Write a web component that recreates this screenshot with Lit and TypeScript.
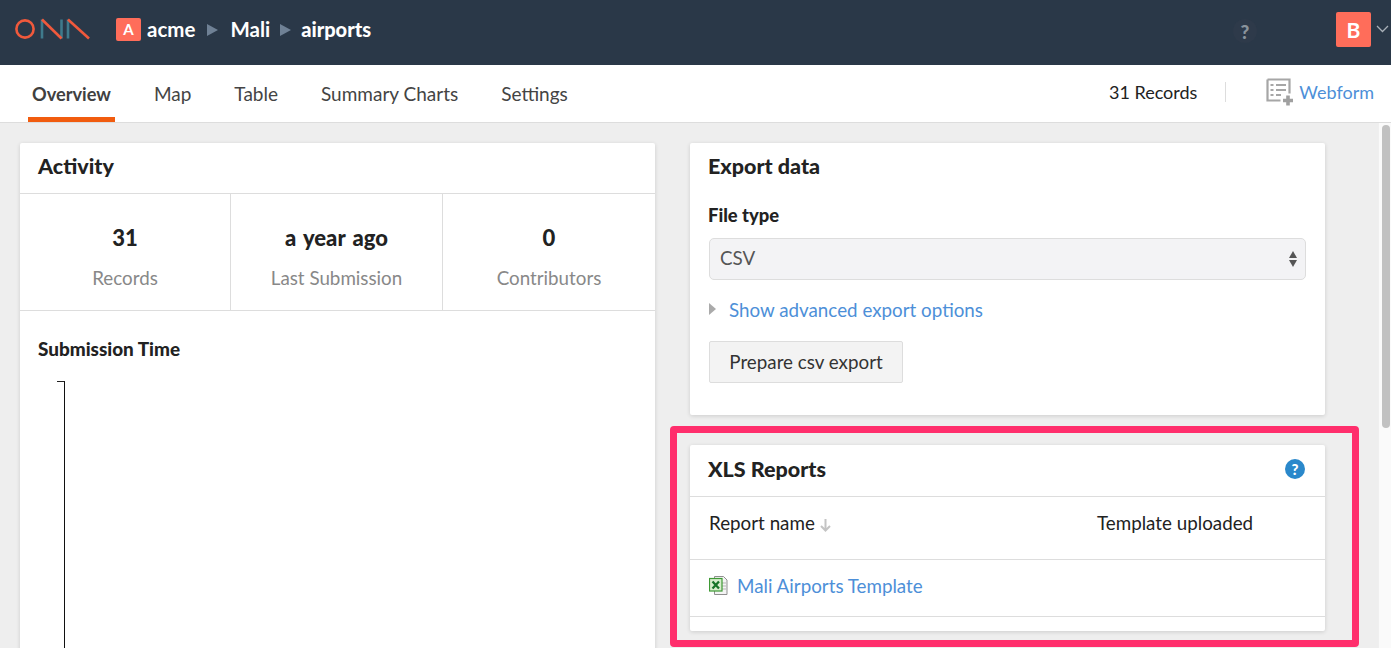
import { LitElement, html, css, svg } from "lit";
import { customElement } from "lit/decorators.js";

const logo = svg`<svg class="logo" width="76" height="22" viewBox="0 0 76 22" fill="none" stroke-width="2.600">
  <circle cx="10" cy="11" r="8.600" stroke="#f0593c" />
  <path d="M27 1.500V20.500" stroke="#3f7a8c" />
  <path d="M46.500 1.500V20.500" stroke="#3f7a8c" />
  <path d="M27 1.500 46.500 20.500" stroke="#f0593c" />
  <path d="M53 1.500V20.500" stroke="#3f7a8c" />
  <path d="M53 1.500 74 20.500" stroke="#f0593c" />
</svg>`;

const webformIcon = svg`<svg width="28" height="28" viewBox="0 0 28 28" fill="none">
  <path d="M1.500 1.500h22v14M1.500 1.500v21h13" stroke="#a6a6a6" stroke-width="2.200" />
  <path d="M4.500 7h3M4.500 12h3M4.500 17h3M10 7h10M10 12h10M10 17h5" stroke="#a6a6a6" stroke-width="2.200" />
  <path d="M22 17.500v10M17 22.500h10" stroke="#a0a0a0" stroke-width="3.600" />
</svg>`;

const excelIcon = svg`<svg width="20" height="21" viewBox="0 0 20 21">
  <path d="M5.500 1.500h9l3.500 3.500v14.500h-12.500z" fill="#f4f4f4" stroke="#8f8f8f" />
  <path d="M13 8h4M13 11h4M13 14h4" stroke="#b5b5b5" />
  <rect x="0.500" y="3.500" width="12.500" height="12.500" fill="#d8edcf" stroke="#3f9a35" stroke-width="1.200" />
  <path d="M3.500 6.500 10 13.500M10 6.500 3.500 13.500" stroke="#17752a" stroke-width="2.300" />
</svg>`;

@customElement("app-root")
export class AppRoot extends LitElement {
  static styles = css`
    :host {
      display: flex;
      flex-direction: column;
      height: 648px;
      overflow: hidden;
      font-family: Lato, "Liberation Sans", sans-serif;
      font-size: 18.800px;
      color: #222;
      background: #eee;
    }
    a {
      color: #4d8fd8;
      text-decoration: none;
    }
    .topbar {
      flex: none;
      height: 65px;
      box-sizing: border-box;
      background: #2a3848;
      display: flex;
      align-items: center;
      color: #fff;
      padding: 0 0 7px 15px;
    }
    .logo {
      flex: none;
    }
    .crumbs {
      display: flex;
      align-items: center;
      margin-left: 25px;
      font-size: 20.500px;
      font-weight: 700;
    }
    .org {
      width: 25px;
      height: 23px;
      background: #ff6d5a;
      border-radius: 2px;
      font-size: 15px;
      font-weight: 700;
      display: flex;
      align-items: center;
      justify-content: center;
      margin-right: 6px;
    }
    .sep {
      width: 0;
      height: 0;
      border-left: 11px solid #6f8195;
      border-top: 6px solid transparent;
      border-bottom: 6px solid transparent;
      margin: 2px 12px 0;
    }
    .sep.tight {
      margin: 2px 10px 0;
    }
    .crumbs b {
      font-size: 20px;
      font-weight: 900;
    }
    .top-right {
      margin-left: auto;
      display: flex;
      align-items: center;
    }
    .help {
      width: 24px;
      height: 24px;
      margin-top: 4px;
      border-radius: 50%;
      background: #2e3a4a;
      color: #8a939c;
      font-size: 19px;
      font-weight: 900;
      display: flex;
      align-items: center;
      justify-content: center;
      margin-right: 79px;
    }
    .avatar {
      width: 35px;
      height: 35px;
      background: #ff6d5a;
      border-radius: 2px;
      font-size: 21px;
      font-weight: 700;
      display: flex;
      align-items: center;
      justify-content: center;
    }
    .chev {
      margin: 0 2px 0 5px;
      display: block;
    }
    .tabs {
      flex: none;
      height: 58px;
      box-sizing: border-box;
      background: #fff;
      border-bottom: 1px solid #ddd;
      display: flex;
      align-items: stretch;
      padding-left: 28px;
    }
    .tab {
      display: flex;
      align-items: center;
      padding: 5px 4px 0;
      margin-right: 35px;
      font-size: 19px;
      color: #444;
      border-bottom: 5px solid transparent;
    }
    .tab.on {
      border-bottom-color: #f15c0f;
      font-size: 18.200px;
      font-weight: 700;
      color: #404040;
    }
    .tabs-right {
      margin-left: auto;
      display: flex;
      align-items: center;
      padding: 0 17px 4px 0;
      font-size: 18px;
    }
    .records {
      color: #222;
      padding-right: 28px;
      border-right: 1px solid #ddd;
      line-height: 20px;
      margin-right: 40px;
    }
    .webform {
      display: flex;
      align-items: center;
      gap: 5px;
    }
    .body {
      flex: 1;
      min-height: 0;
      display: flex;
    }
    .main {
      flex: 1;
      padding: 20px 0 0 20px;
      display: grid;
      grid-template-columns: 635px 635px;
      column-gap: 35px;
      align-items: start;
    }
    .scroll {
      flex: none;
      width: 13px;
      background: #fafafa;
      border-left: 1px solid #efefef;
      box-sizing: border-box;
      padding: 2px 1px 0 3px;
    }
    .thumb {
      height: 303px;
      background: #c1c1c1;
      border-radius: 5px;
    }
    .card {
      background: #fff;
      border-radius: 2px;
      box-shadow: 0 1px 4px rgba(0, 0, 0, 0.14);
    }
    .card h2 {
      margin: 0;
      font-size: 21.500px;
      font-weight: 900;
      line-height: 24px;
      color: #222;
    }
    .activity {
      height: 600px;
    }
    .activity h2 {
      padding: 11px 18px 15px;
      border-bottom: 1px solid #ddd;
    }
    .stats {
      display: grid;
      grid-template-columns: 210px 212px 1fr;
      height: 117px;
      box-sizing: border-box;
      border-bottom: 1px solid #ddd;
      text-align: center;
    }
    .stat {
      border-left: 1px solid #ddd;
      display: flex;
      flex-direction: column;
      align-items: center;
      padding-top: 32px;
      box-sizing: border-box;
    }
    .stat:first-child {
      border-left: 0;
    }
    .stat b {
      font-size: 22px;
      word-spacing: 2px;
      line-height: 24px;
      font-weight: 900;
      color: #222;
    }
    .stat span {
      color: #888;
      margin-top: 17px;
      line-height: 22px;
    }
    .chart {
      padding: 27px 18px 0;
    }
    .chart h3 {
      margin: 0;
      font-size: 18.900px;
      line-height: 22px;
      font-weight: 900;
    }
    .axis {
      margin: 21px 0 0 19px;
      width: 7px;
      height: 300px;
      border-top: 1px solid #222;
      border-right: 1.500px solid #111;
    }
    .col {
      display: flex;
      flex-direction: column;
      gap: 30px;
    }
    .export {
      height: 272px;
      box-sizing: border-box;
      padding: 11px 19px 0;
    }
    .export h2 {
      margin-left: -1px;
    }
    .label {
      font-weight: 900;
      font-size: 18.400px;
      line-height: 22px;
      margin-top: 26px;
      margin-left: -1px;
    }
    .select {
      height: 42px;
      box-sizing: border-box;
      margin-top: 12px;
      background: #f3f3f5;
      border: 1px solid #ddd;
      border-radius: 5px;
      display: flex;
      align-items: center;
      justify-content: space-between;
      padding: 0 8px 3px 10px;
      color: #555;
    }
    .arrows {
      display: flex;
      flex-direction: column;
      gap: 2px;
      margin-bottom: -3px;
    }
    .arrows i {
      width: 0;
      height: 0;
      border-left: 4.500px solid transparent;
      border-right: 4.500px solid transparent;
    }
    .arrows i:first-child {
      border-bottom: 7px solid #555;
    }
    .arrows i:last-child {
      border-top: 7px solid #555;
    }
    .advanced {
      display: flex;
      align-items: center;
      margin-top: 19px;
      line-height: 22px;
    }
    .advanced i {
      width: 0;
      height: 0;
      border-left: 7px solid #aaa;
      border-top: 6px solid transparent;
      border-bottom: 6px solid transparent;
      margin: 0 13px 2px 0;
    }
    .btn {
      display: flex;
      align-items: center;
      justify-content: center;
      width: 194px;
      height: 42px;
      box-sizing: border-box;
      margin-top: 20px;
      padding-bottom: 2px;
      background: #f3f3f3;
      border: 1px solid #ddd;
      border-radius: 2px;
      color: #333;
    }
    .xls-wrap {
      position: relative;
    }
    .xls {
      height: 186px;
      overflow: hidden;
    }
    .xls-head {
      height: 52px;
      box-sizing: border-box;
      border-bottom: 1px solid #ddd;
      display: flex;
      align-items: center;
      justify-content: space-between;
      padding: 0 20px 3px 19px;
    }
    .xls-head h2 {
      margin-left: -1px;
    }
    .q {
      width: 20px;
      height: 20px;
      border-radius: 50%;
      background: #2a88cb;
      color: #fff;
      font-size: 15px;
      font-weight: 900;
      display: flex;
      align-items: center;
      justify-content: center;
    }
    .xls-cols {
      height: 63px;
      box-sizing: border-box;
      border-bottom: 1px solid #ddd;
      display: grid;
      grid-template-columns: 388px 1fr;
      padding: 15px 19px 0;
      line-height: 22px;
      color: #222;
    }
    .sort {
      margin-left: 5px;
      vertical-align: -2px;
    }
    .xls-row {
      height: 57px;
      box-sizing: border-box;
      border-bottom: 1px solid #ddd;
      display: flex;
      align-items: center;
      gap: 8px;
      padding: 0 19px 6px;
    }
    .annotation {
      position: absolute;
      inset: -19px -34px -16px -20px;
      border: 7px solid #ff2e6c;
      border-radius: 4px;
      pointer-events: none;
    }
  `;

  render() {
    return html`
      <header class="topbar">
        ${logo}
        <div class="crumbs">
          <span class="org">A</span>
          <span>acme</span>
          <i class="sep"></i>
          <span>Mali</span>
          <i class="sep tight"></i>
          <b>airports</b>
        </div>
        <div class="top-right">
          <span class="help">?</span>
          <span class="avatar">B</span>
          <svg class="chev" width="13" height="8" viewBox="0 0 13 8" fill="none">
            <path d="M1 1l5.500 5.500L12 1" stroke="#a8b0b8" stroke-width="1.300" />
          </svg>
        </div>
      </header>
      <nav class="tabs">
        <span class="tab on">Overview</span>
        <span class="tab">Map</span>
        <span class="tab">Table</span>
        <span class="tab">Summary Charts</span>
        <span class="tab">Settings</span>
        <div class="tabs-right">
          <span class="records">31 Records</span>
          <a class="webform" href="#">${webformIcon}Webform</a>
        </div>
      </nav>
      <div class="body">
        <main class="main">
          <section class="card activity">
            <h2>Activity</h2>
            <div class="stats">
              <div class="stat"><b>31</b><span>Records</span></div>
              <div class="stat"><b>a year ago</b><span>Last Submission</span></div>
              <div class="stat"><b>0</b><span>Contributors</span></div>
            </div>
            <div class="chart">
              <h3>Submission Time</h3>
              <div class="axis"></div>
            </div>
          </section>
          <div class="col">
            <section class="card export">
              <h2>Export data</h2>
              <div class="label">File type</div>
              <div class="select">
                CSV
                <span class="arrows"><i></i><i></i></span>
              </div>
              <div class="advanced"><i></i><a href="#">Show advanced export options</a></div>
              <div class="btn">Prepare csv export</div>
            </section>
            <div class="xls-wrap">
              <section class="card xls">
                <div class="xls-head">
                  <h2>XLS Reports</h2>
                  <span class="q">?</span>
                </div>
                <div class="xls-cols">
                  <span>Report name<svg class="sort" width="11" height="13" viewBox="0 0 11 13" fill="none"><path d="M5.500 0v11M1 7l4.500 4.500L10 7" stroke="#c4c4c4" stroke-width="2" /></svg></span>
                  <span>Template uploaded</span>
                </div>
                <div class="xls-row">${excelIcon}<a href="#">Mali Airports Template</a></div>
              </section>
              <div class="annotation"></div>
            </div>
          </div>
        </main>
        <div class="scroll"><div class="thumb"></div></div>
      </div>
    `;
  }
}
